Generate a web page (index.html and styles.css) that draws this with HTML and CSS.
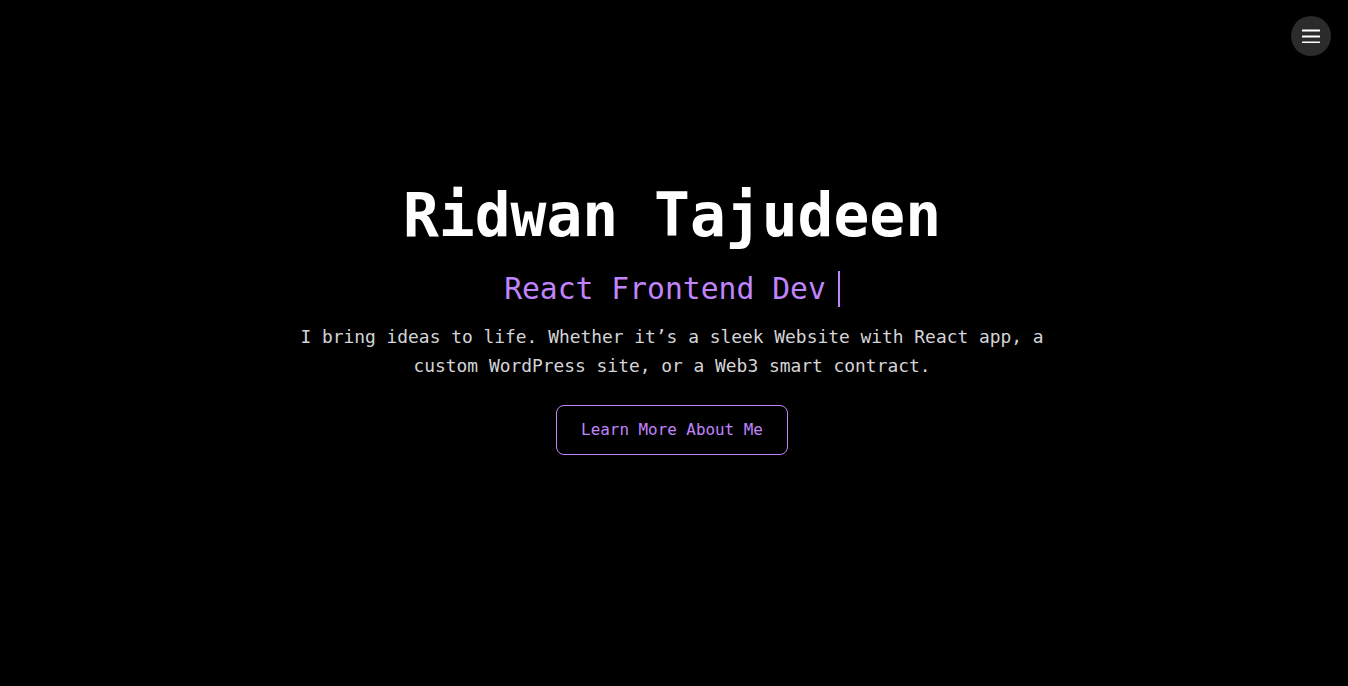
FILE: index.html
```html
<!DOCTYPE html>
<html lang="en">
<head>
<meta charset="utf-8">
<title>Ridwan Tajudeen</title>
<link rel="stylesheet" href="styles.css">
</head>
<body>
<button class="menu-btn" aria-label="Open menu">
  <svg width="18" height="14" viewBox="0 0 18 14" aria-hidden="true">
    <rect x="0" y="0.5" width="18" height="2" rx="0.5" fill="#fff"/>
    <rect x="0" y="6.5" width="18" height="2" rx="0.5" fill="#fff"/>
    <rect x="0" y="12.5" width="18" height="2" rx="0.5" fill="#fff"/>
  </svg>
</button>
<main class="hero">
  <h1 class="title">Ridwan Tajudeen</h1>
  <p class="subtitle"><span class="typed">React Frontend Dev</span><span class="cursor"></span></p>
  <p class="intro">I bring ideas to life. Whether it’s a sleek Website with React app, a custom WordPress site, or a Web3 smart contract.</p>
  <a class="cta" href="#about">Learn More About Me</a>
</main>
</body>
</html>
```
FILE: styles.css
```css
* { box-sizing: border-box; }
html, body {
  margin: 0;
  padding: 0;
  background: #000;
  height: 100%;
}
body {
  font-family: "DejaVu Sans Mono", "Liberation Mono", monospace;
  color: #fff;
  overflow: hidden;
}
.menu-btn {
  position: fixed;
  top: 16px;
  right: 17px;
  width: 40px;
  height: 40px;
  border-radius: 50%;
  border: none;
  background: #2b2b2b;
  display: flex;
  align-items: center;
  justify-content: center;
  padding: 0;
  cursor: pointer;
}
.menu-btn svg { display: block; }
.hero {
  display: flex;
  flex-direction: column;
  align-items: center;
  text-align: center;
  padding: 186px 24px 0 20px;
}
.title {
  margin: 0;
  font-size: 59.6px;
  line-height: 60px;
  font-weight: 700;
  color: #fff;
}
.subtitle {
  margin: 25px 0 0;
  font-size: 29.7px;
  line-height: 36px;
  color: #c084fc;
  display: flex;
  align-items: center;
}
.cursor {
  display: inline-block;
  width: 2px;
  height: 36px;
  margin-left: 12px;
  background: #c084fc;
}
.intro {
  margin: 15px 0 0;
  max-width: 768px;
  font-size: 17.9px;
  line-height: 29.25px;
  color: #d4d4d8;
}
.cta {
  margin-top: 24px;
  display: inline-block;
  padding: 12px 24px;
  font-size: 15.9px;
  line-height: 24px;
  color: #c084fc;
  border: 1px solid #c084fc;
  border-radius: 8px;
  text-decoration: none;
}
```
